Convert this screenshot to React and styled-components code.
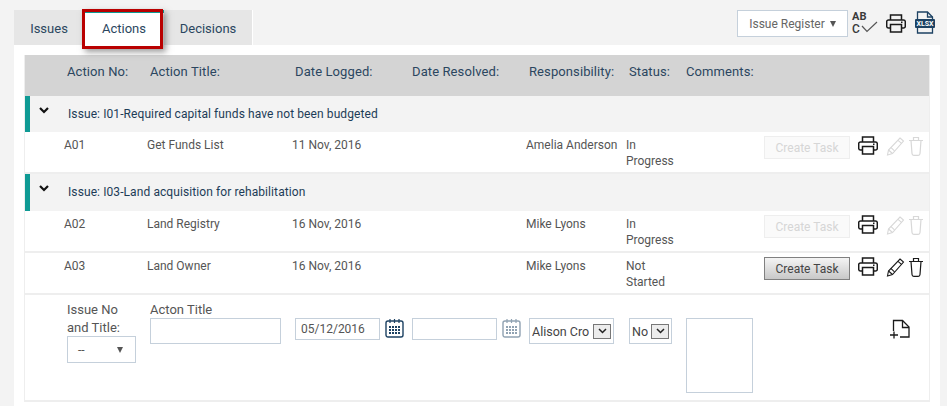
import styled, { createGlobalStyle } from "styled-components";

const GlobalStyle = createGlobalStyle`
  html, body {
    margin: 0;
    background: #f3f3f3;
  }
  body {
    font-family: Roboto, "Liberation Sans", sans-serif;
    font-size: 12px;
    color: #1d3c57;
  }
`;

const COLUMNS = "83px 145px 117px 117px 100px 138px 94px 28px 1fr";
const HEAD_COLUMNS = "83px 145px 117px 117px 100px 57px 1fr";

const Printer = () => (
  <svg width="20" height="19" viewBox="0 0 20 19" fill="none" stroke="#1a1a1a" strokeWidth="1.500">
    <path d="M4.500 6V1h11v5" />
    <path d="M4.500 14H2.500a1.800 1.800 0 0 1-1.800-1.800V7.800A1.800 1.800 0 0 1 2.500 6h15a1.800 1.800 0 0 1 1.800 1.800v4.400A1.800 1.800 0 0 1 17.500 14h-2" />
    <path d="M4.500 10.500h11V18h-11z" />
    <path d="M15 8.300h1.500" />
  </svg>
);

const Pencil = ({ muted }) => (
  <svg width="19" height="20" viewBox="0 0 19 20" fill="none" stroke={muted ? "#d8d8d8" : "#1a1a1a"} strokeWidth="1.100">
    <path d="M14 2l3.500 3L6.500 17.500l-5 1.500 1-5z" />
    <path d="M12 4.300l3.500 3M2.500 14l4 3.500M4.800 11.300l3.700 3.500" />
  </svg>
);

const Trash = ({ muted }) => (
  <svg width="14" height="20" viewBox="0 0 14 20" fill="none" stroke={muted ? "#d8d8d8" : "#1a1a1a"} strokeWidth="1.200">
    <path d="M0 4.500h14M4.500 4.500V1.500h5v3" />
    <path d="M2 4.500l1 13q.1 1.800 1.800 1.800h4.400q1.700 0 1.800-1.800l1-13" />
  </svg>
);

const Calendar = ({ muted }) => {
  const tone = muted ? "#90a2b2" : "#1d4263";
  return (
    <svg width="19" height="20" viewBox="0 0 19 20" fill="none">
      <rect x="1" y="3" width="17" height="16" rx="2" stroke={tone} strokeWidth="1.400" />
      <path d="M5 1v4M9.500 1v4M14 1v4" stroke={tone} strokeWidth="1.200" />
      {[8, 11, 14].map((y) =>
        [4, 7, 10, 13].map((x) => <rect key={`${x}-${y}`} x={x} y={y} width="2" height="2" fill={tone} />)
      )}
    </svg>
  );
};

const NewDoc = () => (
  <svg width="20" height="20" viewBox="0 0 20 20" fill="none" stroke="#1a1a1a" strokeWidth="1.300">
    <path d="M3.500 12V1.500h9l6.500 6.500v10h-9" />
    <path d="M12.500 1.500v7H19" />
    <path d="M4 12.500v7M0 16h8" />
  </svg>
);

const Spell = () => (
  <SpellBox>
    <SpellText>AB</SpellText>
    <SpellLetter>C</SpellLetter>
    <SpellCheck width="17" height="12" viewBox="0 0 17 12" fill="none" stroke="#555" strokeWidth="1.200">
      <path d="M1 5l5 5.500L16 1" />
    </SpellCheck>
  </SpellBox>
);

const Xlsx = () => (
  <svg width="20" height="23" viewBox="0 0 20 23" fill="none">
    <path d="M2.500 8V1h10l5 5v2M17.500 17v5h-15v-5" stroke="#1d4263" strokeWidth="1.300" />
    <path d="M12.500 1v5h5" stroke="#1d4263" strokeWidth="1.300" />
    <rect x="0" y="8" width="20" height="9" rx="1" fill="#1d4263" />
    <text x="10" y="15" textAnchor="middle" fontFamily="Roboto, sans-serif" fontSize="7" fontWeight="700" fill="#fff">XLSX</text>
  </svg>
);

const ChevronDown = () => (
  <svg width="10" height="7" viewBox="0 0 10 7" fill="none" stroke="#111" strokeWidth="2.200">
    <path d="M1 1l4 4 4-4" />
  </svg>
);

const SelectChevron = () => (
  <svg width="9" height="6" viewBox="0 0 9 6" fill="none" stroke="#222" strokeWidth="1.500">
    <path d="M1 1l3.500 3.500L8 1" />
  </svg>
);

const Page = styled.div`
  width: 947px;
  height: 406px;
  overflow: hidden;
  padding: 10px 7px 0 14px;
  box-sizing: border-box;
  display: flex;
  flex-direction: column;
`;

const TopBar = styled.div`
  display: flex;
  justify-content: space-between;
  height: 35px;
`;

const Tabs = styled.div`
  display: flex;
  background: #e6e6e6;
  border-right: 1px solid #fff;
  position: relative;
`;

const Tab = styled.div`
  width: ${(p) => p.$width}px;
  box-sizing: border-box;
  text-align: center;
  font-size: 13px;
  color: #2b4660;
  background: ${(p) => (p.$active ? "#fff" : "transparent")};
  border-top: ${(p) => (p.$active ? "3px solid #0f9a94" : "0")};
  padding-top: ${(p) => (p.$active ? "8px" : "11px")};
`;

const Highlight = styled.div`
  position: absolute;
  left: 68px;
  top: -1px;
  width: 81px;
  height: 40px;
  box-sizing: border-box;
  border: 3px solid #b90000;
  box-shadow: 3px 3px 6px rgba(60, 60, 60, 0.5);
  pointer-events: none;
`;

const Tools = styled.div`
  display: flex;
  align-items: flex-start;
`;

const RegisterButton = styled.div`
  width: 111px;
  height: 27px;
  box-sizing: border-box;
  background: #fff;
  border: 1px solid #c5d0db;
  display: flex;
  align-items: center;
  justify-content: center;
  gap: 5px;
  color: #666;
  margin-right: 4px;
`;

const Caret = styled.span`
  width: 0;
  height: 0;
  border-left: 3.500px solid transparent;
  border-right: 3.500px solid transparent;
  border-top: 6px solid #555;
`;

const SpellBox = styled.div`
  position: relative;
  width: 25px;
  height: 24px;
  margin-right: 9px;
  margin-top: 1px;
  font-size: 11px;
  font-weight: 700;
  line-height: 12px;
  color: #3a3a3a;
`;

const SpellText = styled.div``;

const SpellLetter = styled.div`
  font-size: 12px;
  line-height: 13px;
  font-weight: 500;
`;

const SpellCheck = styled.svg`
  position: absolute;
  left: 9px;
  top: 10px;
`;

const ToolIcon = styled.div`
  margin-top: ${(p) => p.$top}px;
  margin-right: ${(p) => p.$right}px;
  display: flex;
`;

const Panel = styled.div`
  flex: 1;
  background: #fff;
  padding: 10px 10px 0 10px;
`;

const Table = styled.div`
  border: 1px solid #eeeeee;
  border-top: 0;
  border-bottom: 0;
`;

const HeadRow = styled.div`
  display: grid;
  grid-template-columns: ${HEAD_COLUMNS};
  height: 41px;
  box-sizing: border-box;
  padding: 9px 0 0 42px;
  background: #d4d4d4;
  font-size: 13px;
  letter-spacing: 0.1px;
  color: #2b4660;
`;

const GroupRow = styled.div`
  display: flex;
  align-items: flex-start;
  height: ${(p) => p.$height}px;
  padding-top: 11px;
  background: #f3f3f3;
  border-left: 5px solid #0f9a94;
  box-sizing: border-box;
  letter-spacing: 0.09px;
  color: #1d3c57;
`;

const GroupToggle = styled.span`
  width: 38px;
  padding-left: 9px;
  box-sizing: border-box;
  display: flex;
`;

const Row = styled.div`
  display: grid;
  grid-template-columns: ${COLUMNS};
  height: 42px;
  box-sizing: border-box;
  padding: 5px 0 0 39px;
  background: #fff;
  border-bottom: 2px solid #eeeeee;
  color: #555;
  line-height: 16px;
`;

const CreateTask = styled.div`
  width: 86px;
  height: 23px;
  margin-top: -1px;
  box-sizing: border-box;
  display: flex;
  align-items: center;
  justify-content: center;
  border: 1px solid ${(p) => (p.$enabled ? "#808080" : "#eeeeee")};
  background: ${(p) => (p.$enabled ? "linear-gradient(#f4f4f4, #c8c8c8)" : "#fafafa")};
  color: ${(p) => (p.$enabled ? "#444" : "#d6d6d6")};
`;

const IconCell = styled.div`
  display: flex;
  align-items: flex-start;
  gap: 4px;
  margin-top: -1px;
`;

const FormRow = styled.div`
  display: grid;
  grid-template-columns: ${HEAD_COLUMNS};
  height: 107px;
  box-sizing: border-box;
  padding: 5px 0 0 42px;
  background: #fff;
  border-bottom: 2px solid #eeeeee;
  color: #555;
`;

const FieldLabel = styled.div`
  font-size: 13px;
  line-height: 18px;
  margin: 1px 0 -1px;
`;

const Dropdown = styled.div`
  width: 69px;
  height: 27px;
  margin-top: -1px;
  box-sizing: border-box;
  border: 1px solid #c5d0db;
  display: flex;
  align-items: center;
  justify-content: space-between;
  padding: 0 12px 0 10px;
`;

const TextInput = styled.div`
  width: ${(p) => p.$width}px;
  height: ${(p) => p.$height}px;
  box-sizing: border-box;
  border: 1px solid #c5d0db;
  padding: 0 5px;
  line-height: 20px;
`;

const DateCell = styled.div`
  display: flex;
  gap: 5px;
  margin-top: 18px;
  align-items: flex-start;
`;

const NativeSelect = styled.div`
  width: ${(p) => p.$width}px;
  height: 26px;
  margin-top: 18px;
  box-sizing: border-box;
  border: 1px solid #c5d0db;
  display: flex;
  align-items: center;
  padding: 0 2px;
  font-size: 12.500px;
  color: #444;
`;

const SelectLabel = styled.span`
  flex: 1;
  min-width: 0;
  overflow: hidden;
  white-space: nowrap;
`;

const SelectArrow = styled.span`
  width: 18px;
  height: 15px;
  flex: none;
  margin-left: 3px;
  box-sizing: border-box;
  border: 1px solid #777;
  background: #ececec;
  display: flex;
  align-items: center;
  justify-content: center;
`;

const FormEnd = styled.div`
  display: flex;
  align-items: flex-start;
  margin-top: 18px;
`;

const CommentBox = styled.div`
  width: 67px;
  height: 75px;
  box-sizing: border-box;
  border: 1px solid #c5d0db;
  flex: none;
`;

const AddCell = styled.div`
  display: flex;
  margin: 1px 0 0 137px;
`;

const StatusText = styled.div`
  width: 60px;
`;

const groups = [
  {
    title: "Issue: I01-Required capital funds have not been budgeted",
    height: 36,
    rows: [{ no: "A01", title: "Get Funds List", date: "11 Nov, 2016", who: "Amelia Anderson", status: "In Progress" }],
  },
  {
    title: "Issue: I03-Land acquisition for rehabilitation",
    height: 37,
    rows: [
      { no: "A02", title: "Land Registry", date: "16 Nov, 2016", who: "Mike Lyons", status: "In Progress" },
      { no: "A03", title: "Land Owner", date: "16 Nov, 2016", who: "Mike Lyons", status: "Not Started", enabled: true },
    ],
  },
];

const headings = ["Action No:", "Action Title:", "Date Logged:", "Date Resolved:", "Responsibility:", "Status:", "Comments:"];

export default function App() {
  return (
    <Page>
      <GlobalStyle />
      <TopBar>
        <Tabs>
          <Tab $width={70}>Issues</Tab>
          <Tab $width={80} $active>Actions</Tab>
          <Tab $width={88}>Decisions</Tab>
          <Highlight />
        </Tabs>
        <Tools>
          <RegisterButton>
            Issue Register <Caret />
          </RegisterButton>
          <Spell />
          <ToolIcon $top={4} $right={9}><Printer /></ToolIcon>
          <ToolIcon $top={1} $right={5}><Xlsx /></ToolIcon>
        </Tools>
      </TopBar>
      <Panel>
        <Table>
          <HeadRow>
            {headings.map((h) => <div key={h}>{h}</div>)}
          </HeadRow>
          {groups.map((g) => (
            <div key={g.title}>
              <GroupRow $height={g.height}>
                <GroupToggle><ChevronDown /></GroupToggle>
                {g.title}
              </GroupRow>
              {g.rows.map((r) => (
                <Row key={r.no}>
                  <div>{r.no}</div>
                  <div>{r.title}</div>
                  <div>{r.date}</div>
                  <div />
                  <div>{r.who}</div>
                  <StatusText>{r.status}</StatusText>
                  <CreateTask $enabled={r.enabled}>Create Task</CreateTask>
                  <IconCell><Printer /></IconCell>
                  <IconCell>
                    <Pencil muted={!r.enabled} />
                    <Trash muted={!r.enabled} />
                  </IconCell>
                </Row>
              ))}
            </div>
          ))}
          <FormRow>
            <div>
              <FieldLabel>Issue No<br />and Title:</FieldLabel>
              <Dropdown>-- <Caret /></Dropdown>
            </div>
            <div>
              <FieldLabel>Acton Title</FieldLabel>
              <TextInput $width={131} $height={26} />
            </div>
            <DateCell>
              <TextInput $width={85} $height={22}>05/12/2016</TextInput>
              <Calendar />
            </DateCell>
            <DateCell>
              <TextInput $width={85} $height={22} />
              <Calendar muted />
            </DateCell>
            <NativeSelect $width={85}>
              <SelectLabel>Alison Cro</SelectLabel>
              <SelectArrow><SelectChevron /></SelectArrow>
            </NativeSelect>
            <NativeSelect $width={43}>
              <SelectLabel>No</SelectLabel>
              <SelectArrow><SelectChevron /></SelectArrow>
            </NativeSelect>
            <FormEnd>
              <CommentBox />
              <AddCell><NewDoc /></AddCell>
            </FormEnd>
          </FormRow>
        </Table>
      </Panel>
    </Page>
  );
}
